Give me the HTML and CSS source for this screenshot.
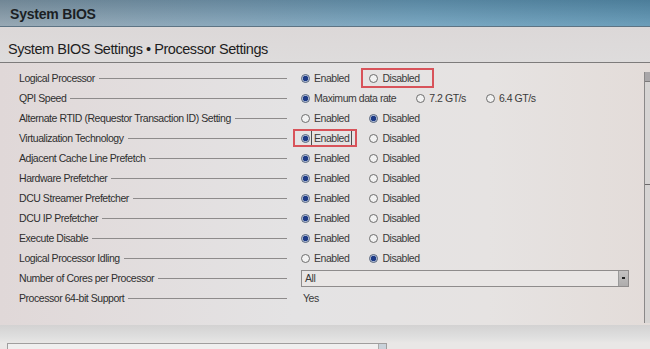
FILE: index.html
```html
<!DOCTYPE html>
<html lang="en">
<head>
    <meta charset="UTF-8">
    <title>System BIOS</title>
    <link rel="stylesheet" href="styles.css">
</head>
<body>
    <div class="screen">
        <div class="topbar">System BIOS</div>
        <div class="crumb">System BIOS Settings &bull; Processor Settings</div>

        <div class="panel">
            <div class="settings">
                <div class="row">
                    <div class="label"><span>Logical Processor</span></div>
                    <div class="value">
                        <span class="opt on">Enabled</span>
                        <span class="opt marked marked-wide">Disabled</span>
                    </div>
                </div>
                <div class="row">
                    <div class="label"><span>QPI Speed</span></div>
                    <div class="value">
                        <span class="opt on">Maximum data rate</span>
                        <span class="opt">7.2 GT/s</span>
                        <span class="opt">6.4 GT/s</span>
                    </div>
                </div>
                <div class="row">
                    <div class="label"><span>Alternate RTID (Requestor Transaction ID) Setting</span></div>
                    <div class="value">
                        <span class="opt">Enabled</span>
                        <span class="opt on">Disabled</span>
                    </div>
                </div>
                <div class="row">
                    <div class="label"><span>Virtualization Technology</span></div>
                    <div class="value">
                        <span class="opt on marked"><span class="focus">Enabled</span></span>
                        <span class="opt">Disabled</span>
                    </div>
                </div>
                <div class="row">
                    <div class="label"><span>Adjacent Cache Line Prefetch</span></div>
                    <div class="value">
                        <span class="opt on">Enabled</span>
                        <span class="opt">Disabled</span>
                    </div>
                </div>
                <div class="row">
                    <div class="label"><span>Hardware Prefetcher</span></div>
                    <div class="value">
                        <span class="opt on">Enabled</span>
                        <span class="opt">Disabled</span>
                    </div>
                </div>
                <div class="row">
                    <div class="label"><span>DCU Streamer Prefetcher</span></div>
                    <div class="value">
                        <span class="opt on">Enabled</span>
                        <span class="opt">Disabled</span>
                    </div>
                </div>
                <div class="row">
                    <div class="label"><span>DCU IP Prefetcher</span></div>
                    <div class="value">
                        <span class="opt on">Enabled</span>
                        <span class="opt">Disabled</span>
                    </div>
                </div>
                <div class="row">
                    <div class="label"><span>Execute Disable</span></div>
                    <div class="value">
                        <span class="opt on">Enabled</span>
                        <span class="opt">Disabled</span>
                    </div>
                </div>
                <div class="row">
                    <div class="label"><span>Logical Processor Idling</span></div>
                    <div class="value">
                        <span class="opt">Enabled</span>
                        <span class="opt on">Disabled</span>
                    </div>
                </div>
                <div class="row">
                    <div class="label"><span>Number of Cores per Processor</span></div>
                    <div class="value">
                        <div class="select">
                            <span>All</span>
                            <span class="select-btn"></span>
                        </div>
                    </div>
                </div>
                <div class="row">
                    <div class="label"><span>Processor 64-bit Support</span></div>
                    <div class="value plain">Yes</div>
                </div>
            </div>
            <div class="scroll">
                <div class="scroll-cap"></div>
                <div class="scroll-tick"></div>
            </div>
        </div>

        <div class="footer">
            <div class="helpbox"><span class="help-btn"></span></div>
        </div>
    </div>
</body>
</html>
```

FILE: styles.css
```css
body {
    margin: 0;
    font-family: "Liberation Sans", Arial, sans-serif;
    color: #333;
    background: #e2dedd;
}

.screen {
    width: 650px;
    height: 349px;
    overflow: hidden;
    display: flex;
    flex-direction: column;
    background: linear-gradient(to right, #e0d8d8 0%, #e4e3e4 45%, #e6e3e2 75%, #e3dcd9 100%);
}

.topbar {
    height: 26px;
    line-height: 28px;
    padding-left: 10px;
    font-size: 14px;
    font-weight: bold;
    letter-spacing: -0.2px;
    color: #1b1f24;
    border-bottom: 1px solid #5d7484;
    background:
        linear-gradient(to bottom, rgba(30, 60, 80, 0.25), rgba(255, 255, 255, 0.1)),
        linear-gradient(to right, #8c9fac 0%, #7ea0b6 35%, #6c9fbc 65%, #5b93b2 100%);
}

.crumb {
    height: 35px;
    line-height: 45px;
    padding-left: 8px;
    font-size: 14.5px;
    letter-spacing: -0.45px;
    color: #1e1e1e;
    border-bottom: 1px solid #7d7b7b;
    background: linear-gradient(to bottom, #dcd8d8, #dedcdc);
}

.panel {
    flex: 1;
    display: flex;
}

.settings {
    flex: 1;
    padding-top: 5px;
}

.row {
    height: 20px;
    display: flex;
    align-items: center;
    font-size: 10.5px;
    letter-spacing: -0.45px;
}

.label {
    width: 268px;
    margin-left: 19px;
    margin-right: 14px;
    display: flex;
    align-items: center;
    color: #2f2f2f;
}

.label span {
    white-space: nowrap;
}

.label::after {
    content: "";
    flex: 1;
    margin-left: 4px;
    border-top: 1px solid #8e8b8b;
}

.value {
    display: flex;
    align-items: center;
    color: #3a3a3a;
}

.value.plain {
    padding-left: 2px;
}

.opt {
    position: relative;
    display: flex;
    align-items: center;
    min-width: 48px;
    margin-right: 20px;
    white-space: nowrap;
}

.opt::before {
    content: "";
    width: 7px;
    height: 7px;
    margin-right: 4px;
    border: 1px solid #6d6d6d;
    border-radius: 50%;
    background: #f2f2f2;
    flex-shrink: 0;
}

.opt.on::before {
    border-color: #51607a;
    background: radial-gradient(circle, #1d3a86 0, #1d3a86 2.4px, #aab8d6 3px, #dfe5f0 3.5px);
}

.opt.marked::after {
    content: "";
    position: absolute;
    left: -8px;
    right: -8px;
    top: -3px;
    bottom: -3px;
    border: 2px solid #d8535a;
}

.opt.marked-wide::after {
    right: -14px;
    top: -4px;
    bottom: -4px;
}

.focus {
    outline: 1px solid #4e4e4e;
    outline-offset: 2px;
}

.select {
    width: 323px;
    height: 15px;
    display: flex;
    align-items: center;
    justify-content: space-between;
    border: 1px solid #8f8c8c;
    background: #e9e6e5;
    padding-left: 3px;
    font-size: 10.5px;
}

.select-btn {
    width: 9px;
    height: 15px;
    border-left: 1px solid #9a9a9a;
    background: linear-gradient(#c4c2c2, #aeacac);
    display: flex;
    align-items: center;
    justify-content: center;
}

.select-btn::after {
    content: "";
    width: 3px;
    height: 2px;
    background: #222;
}

.scroll {
    width: 5px;
    margin-top: 9px;
    margin-bottom: 2px;
    border-left: 1px solid #8a8888;
    background: #d6d4d3;
    position: relative;
}

.scroll-cap {
    height: 9px;
    background: #a9a7a9;
    border-bottom: 1px solid #7c7a7a;
}

.scroll-tick {
    position: absolute;
    left: 0;
    top: 112px;
    width: 5px;
    height: 1px;
    background: #6c6a6a;
}

.footer {
    height: 24px;
    padding-left: 7px;
    display: flex;
    align-items: flex-end;
    background: linear-gradient(to bottom, #d3d2d2 0, #dfdfdf 12px, #e9e7e6 18px);
}

.helpbox {
    width: 378px;
    height: 5px;
    border: 1px solid #a09e9e;
    border-bottom: none;
    background: #f0efef;
    display: flex;
    justify-content: flex-end;
}

.help-btn {
    width: 7px;
    border-left: 1px solid #aaa;
    background: #c9d2da;
}
```
